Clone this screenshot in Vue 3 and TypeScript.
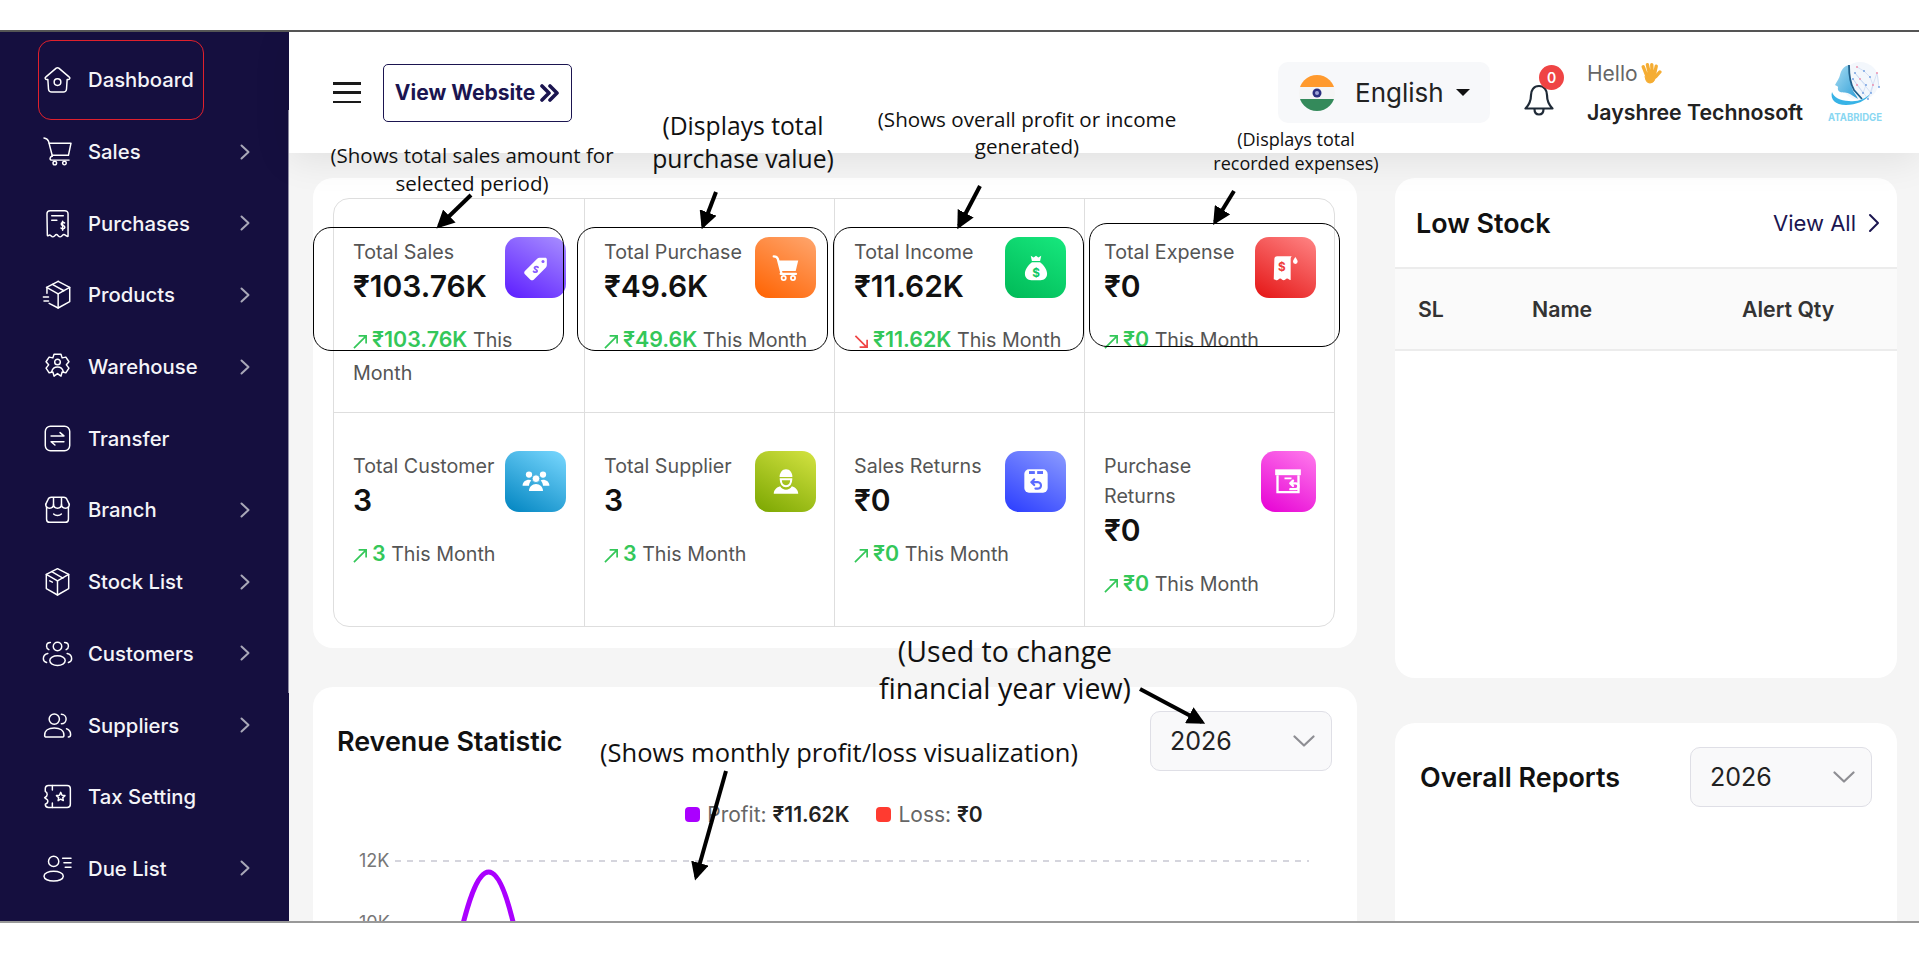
<script setup lang="ts">
interface MenuItem {
  label: string;
  arrow: boolean;
  icon: string[];
}

interface Stat {
  title: string;
  value: string;
  trend: string;
  down?: boolean;
  tone: string;
}

const menu: MenuItem[] = [
  { label: 'Dashboard', arrow: false, icon: ['M2.8 10.2 11 3.2a1.6 1.6 0 0 1 2 0l8.2 7a1 1 0 0 1-.6 1.8h-1.1l-.5 7.6a2.5 2.5 0 0 1-2.5 2.2H7.5A2.5 2.5 0 0 1 5 19.6L4.5 12H3.4a1 1 0 0 1-.6-1.8z', 'M9.4 14a2.6 2.6 0 1 0 5.2 0 2.6 2.6 0 1 0-5.2 0'] },
  { label: 'Sales', arrow: true, icon: ['M1.5 1.5c1.9.2 3 1 3.6 2.8L8 15.5', 'M5.6 5.5h16.9l-2 9.5H7.8', 'M8 15.5c-1.2.3-1.8 1-1.8 1.9 0 .7.6 1.3 1.4 1.3H21', 'M8.5 21a1.4 1.4 0 1 0 2.8 0 1.4 1.4 0 1 0-2.8 0', 'M16 21a1.4 1.4 0 1 0 2.8 0 1.4 1.4 0 1 0-2.8 0'] },
  { label: 'Purchases', arrow: true, icon: ['M3.8 4.5A2.5 2.5 0 0 1 6.3 2h11.4a2.5 2.5 0 0 1 2.5 2.5V22c-1.6.3-2-1.4-3.2-1.4s-1.7 1.8-3 1.8-1.7-1.8-2.8-1.8-1.6 1.8-2.9 1.8-1.6-1.8-2.7-1.4-1.5 1-1.5-.1z', 'M7.5 6h9', 'M7.5 9.5h4', 'M17.5 11.6c-.5-.7-2.6-.7-2.6.7 0 1.7 2.8.9 2.8 2.7 0 1.4-2.3 1.3-3 .5', 'M16 10.2v7'] },
  { label: 'Products', arrow: true, icon: ['M12.5 1.8 21.5 6.5v11l-9 5-7-3.6', 'M12.5 11.5v11', 'M3.5 6.5l9 5 9-5', 'M3.5 6.5l9-4.7', 'M3.8 6.8V11', 'M8 4.2l9 4.9', 'M1 14h4', 'M1.5 17h3.5'] },
  { label: 'Warehouse', arrow: true, icon: ['M9.3 2.5h5.4l.9 2.8 2.9-.6 2.4 3.6-2 2.4 2 2.6-2.4 3.6-2.9-.6-.9 3.2-2.7-2-2.7 2-.9-3.2-2.9.6-2.4-3.6 2-2.6-2-2.4 2.4-3.6 2.9.6z', 'M9.8 8.5a2.2 2.2 0 1 0 4.4 0 2.2 2.2 0 1 0-4.4 0', 'M7.5 16c.6-2.6 2.5-3.6 4.5-3.6s3.9 1 4.5 3.6'] },
  { label: 'Transfer', arrow: false, icon: ['M6.5 2.5h11a4 4 0 0 1 4 4v11a4 4 0 0 1-4 4h-11a4 4 0 0 1-4-4v-11a4 4 0 0 1 4-4z', 'M7 10h10l-3-2.6', 'M17 14.5H7l3 2.6'] },
  { label: 'Branch', arrow: true, icon: ['M2.8 8 4.5 4.5A3 3 0 0 1 7.2 2.5h9.6a3 3 0 0 1 2.7 2L21.2 8', 'M2.8 8c0 2 1.5 3 3 3s3.1-1 3.1-3c0 2 1.5 3 3.1 3s3.1-1 3.1-3c0 2 1.5 3 3.1 3s3-1 3-3', 'M3.5 10v9.5A2.5 2.5 0 0 0 6 22h12a2.5 2.5 0 0 0 2.5-2.5V10', 'M9 15.5c1.5 1.5 4.5 1.5 6 0', 'M8.9 3v5', 'M15.1 3v5'] },
  { label: 'Stock List', arrow: true, icon: ['M12 2l8.7 4.5v11L12 22.5l-8.7-5v-11z', 'M3.3 6.5l8.7 5 8.7-5', 'M12 11.5v11', 'M7.5 4.3l8.7 5', 'M6 11.5l2 1'] },
  { label: 'Customers', arrow: true, icon: ['M8.7 6.5a3.3 3.3 0 1 0 6.6 0 3.3 3.3 0 1 0-6.6 0', 'M6 17.5c0-2.2 2.7-3.8 6-3.8s6 1.6 6 3.8-2.7 3.8-6 3.8-6-1.6-6-3.8z', 'M6.5 3.5c-1.8 0-3 1.3-3 2.8 0 1.2.8 2.2 1.8 2.7', 'M4.5 12C2.3 12.5 1 14 1 16c0 1.5 1 2.5 2.5 3', 'M17.5 3.5c1.8 0 3 1.3 3 2.8 0 1.2-.8 2.2-1.8 2.7', 'M19.5 12c2.2.5 3.5 2 3.5 4 0 1.5-1 2.5-2.5 3'] },
  { label: 'Suppliers', arrow: true, icon: ['M5.5 7a4 4 0 1 0 8 0 4 4 0 1 0-8 0', 'M2 19.5c0-3.5 3-5.5 7.5-5.5s7.5 2 7.5 5.5c0 1-.8 1.5-1.5 1.5h-12C2.8 21 2 20.5 2 19.5z', 'M15 3.3c2.2 0 3.7 1.6 3.7 3.7s-1.5 3.7-3.7 3.7', 'M19 14.5c2 .7 3.2 2.3 3.2 4.5 0 1.2-.8 2-1.8 2'] },
  { label: 'Tax Setting', arrow: false, icon: ['M5 3.5h14.5a2.5 2.5 0 0 1 2.5 2.5v12a2.5 2.5 0 0 1-2.5 2.5H5a2.5 2.5 0 0 1-2.5-2.5c1.5-.5 2-1.5 2-2.5S3 14 2 13c1-.5 2-1.5 2-2.5S3.5 8.5 2.5 8V6A2.5 2.5 0 0 1 5 3.5z', 'M8 3.5V7', 'M8 17v3.5', 'M14.5 8.8l1 2.2 2.3.3-1.7 1.6.4 2.3-2-1.1-2 1.1.4-2.3-1.7-1.6 2.3-.3z'] },
  { label: 'Due List', arrow: true, icon: ['M5 6.5a4 4 0 1 0 8 0 4 4 0 1 0-8 0', 'M1.5 18c0-2.2 3.4-3.8 7.5-3.8s7.5 1.6 7.5 3.8-3.4 3.8-7.5 3.8S1.5 20.2 1.5 18z', 'M16 4h6.5', 'M17 7.5h5.5', 'M18 11h4.5'] },
];

const stats: Stat[] = [
  { title: 'Total Sales', value: '₹103.76K', trend: '₹103.76K', tone: 'purple' },
  { title: 'Total Purchase', value: '₹49.6K', trend: '₹49.6K', tone: 'orange' },
  { title: 'Total Income', value: '₹11.62K', trend: '₹11.62K', down: true, tone: 'green' },
  { title: 'Total Expense', value: '₹0', trend: '₹0', tone: 'red' },
  { title: 'Total Customer', value: '3', trend: '3', tone: 'sky' },
  { title: 'Total Supplier', value: '3', trend: '3', tone: 'olive' },
  { title: 'Sales Returns', value: '₹0', trend: '₹0', tone: 'indigo' },
  { title: 'Purchase Returns', value: '₹0', trend: '₹0', tone: 'pink' },
];

const brainDots: number[][] = [
  [30, 8], [37, 12], [43, 18], [46, 26], [44, 34], [28, 14], [33, 20], [39, 26], [36, 34], [30, 26], [26, 20], [41, 40], [50, 14], [52, 28],
];
</script>

<template>
  <div class="stage">
    <div class="strip-top"></div>

    <div class="frame">
      <aside class="sidebar">
        <span class="side-edge"></span>
        <div v-for="item in menu" :key="item.label" class="side-item">
          <svg class="side-icon" viewBox="1.5 1.5 21 21" fill="none" stroke="#fff" stroke-width="1.15" stroke-linecap="round" stroke-linejoin="round">
            <path v-for="d in item.icon" :key="d" :d="d" />
          </svg>
          <span>{{ item.label }}</span>
          <svg v-if="item.arrow" class="side-chevron" viewBox="0 0 10 16" fill="none" stroke="#a9a8b8" stroke-width="2" stroke-linecap="round" stroke-linejoin="round">
            <path d="M1.5 1.5 8.5 8l-7 6.5" />
          </svg>
        </div>
      </aside>

      <main class="main">
        <header class="topnav">
          <div class="burger"><i></i><i></i><i></i></div>
          <button class="site-btn">
            View Website
            <svg viewBox="0 0 20 18" fill="none" stroke="#1b1550" stroke-width="3.6" stroke-linecap="round" stroke-linejoin="round">
              <path d="M2 2l7 7-7 7M10 2l7 7-7 7" />
            </svg>
          </button>

          <div class="lang">
            <svg class="flag" viewBox="0 0 36 36">
              <defs><clipPath id="flag-c"><circle cx="18" cy="18" r="18" /></clipPath></defs>
              <g clip-path="url(#flag-c)">
                <rect width="36" height="12" fill="#ff9a2e" />
                <rect y="12" width="36" height="12" fill="#f5f5f5" />
                <rect y="24" width="36" height="12" fill="#348a5b" />
              </g>
              <circle cx="18" cy="18" r="4.5" fill="#2b2f80" />
              <circle cx="18" cy="18" r="2" fill="#9ea3d6" />
            </svg>
            <span class="lang-name">English</span>
            <i class="caret"></i>
          </div>

          <div class="bell">
            <svg viewBox="0 0 30 33" fill="none" stroke="#1f2a37" stroke-width="2.2" stroke-linejoin="round" stroke-linecap="round">
              <path d="M15 3C9.5 3 7 7.5 7 12c0 6-2 10-5.5 13.5h27C25 22 23 18 23 12c0-4.5-2.5-9-8-9z" />
              <path d="M10.5 26c0 3.5 2 5.5 4.5 5.5s4.5-2 4.500-5.500" />
            </svg>
            <span class="bell-count">0</span>
          </div>

          <div class="greet">
            <div class="hello">
              Hello
              <svg viewBox="0 0 22 22" fill="none" stroke="#f5ad33" stroke-linecap="round">
                <path d="M4 4.5 7 12M8 2.5l1.800 8M12.200 2.500l.3 8M16.500 4l-1.500 7" stroke-width="3.200" />
                <path d="M20 9.500 16 14" stroke-width="3.200" />
                <path d="M7.500 10.500h7l1 5c-1 3.500-3 4.500-5 4.500S6.500 18 5.800 14z" fill="#f5ad33" stroke-width="1" />
              </svg>
            </div>
            <div class="user">Jayshree Technosoft</div>
          </div>

          <svg class="logo" viewBox="0 0 56 67">
            <defs>
              <linearGradient id="head-g" x1="0" y1="0" x2="1" y2="1">
                <stop offset="0" stop-color="#a8dcf2" />
                <stop offset="1" stop-color="#2f9fd8" />
              </linearGradient>
            </defs>
            <circle cx="33" cy="22" r="19" fill="#f3f7fc" />
            <path v-for="(p, i) in brainDots.slice(1)" :key="i" :d="`M${brainDots[i][0]} ${brainDots[i][1]}L${p[0]} ${p[1]}`" stroke="#b9cdee" stroke-width=".5" />
            <circle v-for="(p, i) in brainDots" :key="'d' + i" :cx="p[0]" :cy="p[1]" r=".9" :fill="i % 3 === 0 ? '#f08aa8' : '#6d9be0'" />
            <path d="M22 6c-5 1-8 5-9 10-.5 3-3 6-5 10 1 1 3 1 3 2-.5 2 0 4 2 5 3 1 7 0 10 2l8 5c-2-5-5-7-6-11-2-7-3-15-3-23z" fill="url(#head-g)" />
            <path d="M22 6c0 9 1 18 5 25l8 9" fill="none" stroke="#1f5f8a" stroke-width="1.8" />
            <path d="M5 33c-2 7 3 13 14 13 10 0 20-4 24-11-5 5-12 8-21 7-9-.5-15-3-17-9z" fill="#38b3e6" />
            <text x="1" y="62" class="logo-text" textLength="54" lengthAdjust="spacingAndGlyphs">ATABRIDGE</text>
          </svg>
        </header>

        <div class="content">
          <div class="col">
            <section class="card stats-card">
              <div class="stats-grid">
                <div v-for="s in stats" :key="s.title" class="stat">
                  <div class="stat-head">
                    <div class="stat-text">
                      <div class="stat-title">{{ s.title }}</div>
                      <div class="stat-value">{{ s.value }}</div>
                    </div>
                    <div class="stat-icon" :class="'tone-' + s.tone">
                      <svg v-if="s.tone === 'purple'" viewBox="0 0 24 24">
                        <path d="M2.5 14.5 13 4c.6-.6 1.3-.8 2-.8h5c.7 0 1.300.6 1.300 1.300v5c0 .7-.2 1.400-.8 2L10 22c-.8.8-2 .8-2.800 0l-4.700-4.700c-.8-.8-.8-2 0-2.800z" fill="#fff" />
                        <circle cx="18" cy="6.5" r="1.3" fill="#8a5cff" />
                        <path d="M13.8 11.5c-.8-1-2.700-1-3.100.2-.5 1.500 2.800 1.500 2.300 3-.4 1.200-2.300 1.200-3.100.2" fill="none" stroke="#8a5cff" stroke-width="1.5" stroke-linecap="round" />
                      </svg>
                      <svg v-else-if="s.tone === 'orange'" viewBox="0 0 24 24">
                        <path d="M1.5 2c2 0 3 .6 3.500 2.200L8 16" fill="none" stroke="#fff" stroke-width="2" stroke-linecap="round" />
                        <path d="M5.5 5.5h17l-2.200 9H7.500z" fill="#fff" />
                        <rect x="6.5" y="16" width="15" height="2" rx="1" fill="#fff" />
                        <circle cx="10" cy="20.5" r="1.8" fill="none" stroke="#fff" stroke-width="1.5" />
                        <circle cx="18" cy="20.5" r="1.8" fill="none" stroke="#fff" stroke-width="1.5" />
                      </svg>
                      <svg v-else-if="s.tone === 'green'" viewBox="0 0 24 24">
                        <path d="M7.5 1.5 10 3l2-1.500L14 3l2.500-1.500L15.500 6h-7zM8.500 7h7c3.500 2.500 6 6.500 6 10 0 3.500-2.500 5.500-5.500 5.500H8c-3 0-5.500-2-5.500-5.500 0-3.500 2.500-7.500 6-10z" fill="#fff" />
                        <text x="12" y="19.5" class="in-icon" fill="#0ec765" text-anchor="middle">$</text>
                      </svg>
                      <svg v-else-if="s.tone === 'red'" viewBox="0 0 24 24">
                        <path d="M2 4.5A2.500 2.500 0 0 1 4.500 2h12.500c-.8.6-1 1.500-1 2.500v17.800c-1 .5-1.800-1.200-3-1.200s-1.800 1.500-3 1.500-1.800-1.500-3-1.500-1.800 1.500-2.800 1.500-1.700-1-2.700-1z" fill="#fff" />
                        <path d="M20 2.5c1 1.500 2 2.800 2 4a2 2 0 0 1-4 0c0-1.200 1-2.500 2-4z" fill="#fff" />
                        <text x="8.5" y="14.5" class="in-icon" fill="#ef3e3e" text-anchor="middle">$</text>
                      </svg>
                      <svg v-else-if="s.tone === 'sky'" viewBox="0 0 24 24">
                        <circle cx="6" cy="6.5" r="2.7" fill="#fff" />
                        <circle cx="18" cy="6.5" r="2.7" fill="#fff" />
                        <circle cx="12" cy="10" r="3.3" fill="#fff" stroke="#3aaadd" stroke-width=".7" />
                        <path d="M.5 16c0-3 2.500-5 5.500-5 .8 0 1.500.2 2 .5-1 1.200-2 2.500-2 4.500z M23.500 16c0-3-2.500-5-5.500-5-.8 0-1.500.2-2 .5 1 1.200 2 2.500 2 4.500z" fill="#fff" />
                        <path d="M6 20.5c0-3.500 2.700-6 6-6s6 2.500 6 6z" fill="#fff" />
                      </svg>
                      <svg v-else-if="s.tone === 'olive'" viewBox="0 0 24 24">
                        <path d="M6.5 8.5c0-3.500 2.200-6.500 5.500-6.500s5.500 3 5.500 6.500z" fill="#fff" />
                        <path d="M7.5 10.5h9c0 3.500-1.800 6-4.500 6s-4.500-2.500-4.500-6z" fill="none" stroke="#fff" stroke-width="1.8" />
                        <path d="M1.5 23c0-3.500 2.500-5.500 5.500-6.500 1 1.800 3 3 5 3s4-1.200 5-3c3 1 5.500 3 5.500 6.500z" fill="#fff" />
                      </svg>
                      <svg v-else-if="s.tone === 'indigo'" viewBox="0 0 24 24">
                        <rect x="2" y="2" width="20" height="20" rx="4" fill="#fff" />
                        <rect x="6" y="3.5" width="5" height="2.5" fill="#5c6cff" />
                        <rect x="13" y="3.5" width="5" height="2.5" fill="#5c6cff" />
                        <path d="M8 13h6a2.800 2.800 0 0 1 0 5.500h-2.500M8 13l2.500-2.500M8 13l2.500 2.500" fill="none" stroke="#5c6cff" stroke-width="1.8" stroke-linecap="round" stroke-linejoin="round" />
                      </svg>
                      <svg v-else viewBox="0 0 24 24">
                        <rect x="1" y="2" width="22" height="5" fill="#fff" />
                        <path d="M3 7v14.500h18V7" fill="none" stroke="#fff" stroke-width="2" />
                        <rect x="9" y="9" width="6" height="1.5" fill="#fff" />
                        <path d="M14 14h4.500a2.500 2.500 0 0 1 0 5H14M14 14l2.300-2.300M14 14l2.300 2.300" fill="none" stroke="#fff" stroke-width="2" stroke-linecap="round" stroke-linejoin="round" />
                      </svg>
                    </div>
                  </div>
                  <div class="stat-trend">
                    <svg v-if="s.down" class="trend-arrow" viewBox="0 0 16 16" fill="none" stroke="#f04545" stroke-width="1.8">
                      <path d="M1.5 2 13 13.500M14 6v8H6" />
                    </svg>
                    <svg v-else class="trend-arrow" viewBox="0 0 16 16" fill="none" stroke="#34c759" stroke-width="1.8">
                      <path d="M1 15 13 3M6 2h8v8" />
                    </svg>
                    <b>{{ s.trend }}</b> This Month
                  </div>
                </div>
              </div>
            </section>

            <section class="card revenue-card">
              <div class="card-row">
                <h2>Revenue Statistic</h2>
                <div class="year-select">
                  2026
                  <svg viewBox="0 0 22 12" fill="none" stroke="#8e8e93" stroke-width="2.2" stroke-linecap="round" stroke-linejoin="round"><path d="M1.5 1.5 11 10.5l9.5-9" /></svg>
                </div>
              </div>
              <div class="legend">
                <i class="dot dot-profit"></i><span>Profit: <b>₹11.62K</b></span>
                <i class="dot dot-loss"></i><span>Loss: <b>₹0</b></span>
              </div>
              <svg class="chart" viewBox="0 0 1044 100">
                <text x="46" y="17.5" class="axis">12K</text>
                <text x="46" y="80" class="axis">10K</text>
                <line x1="82" y1="12" x2="996" y2="12" stroke="#c8c8d2" stroke-width="1.5" stroke-dasharray="6 6" />
                <path d="M144 100C154 55 164 23 175.6 23 187 23 197 55 206 100" fill="none" stroke="#aa00ff" stroke-width="5" />
              </svg>
            </section>
          </div>

          <div class="col side-col">
            <section class="card low-card">
              <div class="low-head">
                <h2>Low Stock</h2>
                <div class="view-all">
                  View All
                  <svg viewBox="0 0 12 20" fill="none" stroke="#1b1550" stroke-width="2" stroke-linecap="round" stroke-linejoin="round"><path d="M2 2l8 8-8 8" /></svg>
                </div>
              </div>
              <div class="low-table">
                <span class="th-sl">SL</span>
                <span class="th-name">Name</span>
                <span>Alert Qty</span>
              </div>
            </section>

            <section class="card overall-card">
              <div class="card-row">
                <h2>Overall Reports</h2>
                <div class="year-select">
                  2026
                  <svg viewBox="0 0 22 12" fill="none" stroke="#8e8e93" stroke-width="2.2" stroke-linecap="round" stroke-linejoin="round"><path d="M1.5 1.5 11 10.5l9.5-9" /></svg>
                </div>
              </div>
            </section>
          </div>
        </div>
      </main>
    </div>

    <div class="strip-bottom"></div>

    <!-- annotations drawn over the screenshot -->
    <div class="mark mark-home"></div>
    <div class="mark box box-sales"></div>
    <div class="mark box box-purchase"></div>
    <div class="mark box box-income"></div>
    <div class="mark box box-expense"></div>

    <div class="note note-sales">(Shows total sales amount for<br />selected period)</div>
    <div class="note note-purchase">(Displays total<br />purchase value)</div>
    <div class="note note-income">(Shows overall profit or income<br />generated)</div>
    <div class="note note-expense">(Displays total<br />recorded expenses)</div>
    <div class="note note-year">(Used to change<br />financial year view)</div>
    <div class="note note-chart">(Shows monthly profit/loss visualization)</div>

    <svg class="arrows" viewBox="0 0 1919 953">
      <defs>
        <marker id="head" viewBox="0 0 10 10" refX="8" refY="5" markerWidth="4.5" markerHeight="4.5" orient="auto">
          <path d="M0 0 10 5 0 10z" fill="#000" />
        </marker>
      </defs>
      <g stroke="#000" stroke-width="4" marker-end="url(#head)">
        <line x1="471" y1="195" x2="439" y2="226" />
        <line x1="716" y1="192" x2="703" y2="226" />
        <line x1="980" y1="186" x2="959" y2="226" />
        <line x1="1234" y1="191" x2="1215" y2="222" />
        <line x1="1140" y1="689" x2="1202" y2="722" />
        <line x1="726" y1="771" x2="696" y2="877" />
      </g>
    </svg>
  </div>
</template>

<style scoped>
.stage {
  position: relative;
  width: 1919px;
  height: 953px;
  overflow: hidden;
  background: #fff;
  font-family: Inter, "Liberation Sans", sans-serif;
  color: #111;
}

.strip-top {
  height: 32px;
  box-sizing: border-box;
  border-bottom: 2px solid #555;
}

.strip-bottom {
  height: 32px;
  box-sizing: border-box;
  border-top: 2px solid #999;
}

.frame {
  display: flex;
  height: 889px;
  overflow: hidden;
}

/* Sidebar */
.sidebar {
  position: relative;
  flex: 0 0 289px;
  box-sizing: border-box;
  padding-top: 12px;
  background: #150f3f;
  color: #f4f4f8;
}

.side-edge {
  position: absolute;
  top: 78px;
  right: 0;
  width: 1px;
  height: 583px;
  background: #8f8da3;
}

.side-item {
  display: flex;
  align-items: center;
  gap: 17px;
  height: 71.7px;
  padding: 0 39px 0 44px;
  font-size: 20.3px;
  font-weight: 500;
}

.side-icon {
  flex: 0 0 27px;
  width: 27px;
  height: 27px;
  overflow: visible;
}

.side-chevron {
  width: 10px;
  height: 16px;
  margin-left: auto;
}

/* Main */
.main {
  flex: 1;
  min-width: 0;
  display: flex;
  flex-direction: column;
  background: #f5f5f5;
}

.topnav {
  position: relative;
  z-index: 2;
  flex: 0 0 121px;
  display: flex;
  align-items: center;
  padding: 0 36px 0 44px;
  background: #fff;
  box-shadow: 0 6px 36px rgba(0, 0, 0, 0.09);
}

.burger {
  display: flex;
  flex-direction: column;
  justify-content: space-between;
  width: 28px;
  height: 21px;
  margin-right: 22px;
}

.burger i {
  height: 2.5px;
  background: #1a1a1a;
}

.site-btn {
  display: flex;
  align-items: center;
  justify-content: center;
  gap: 5px;
  width: 189px;
  height: 58px;
  padding: 0;
  background: #fff;
  border: 1px solid #1b1550;
  border-radius: 5px;
  font: 700 21px Inter, sans-serif;
  color: #1b1550;
}

.site-btn svg {
  width: 20px;
  height: 18px;
}

.lang {
  display: flex;
  align-items: center;
  width: 212px;
  height: 61px;
  box-sizing: border-box;
  margin-left: auto;
  padding-left: 21px;
  background: #f7f8fa;
  border-radius: 10px;
}

.flag {
  width: 36px;
  height: 36px;
}

.lang-name {
  margin-left: 20px;
  font-size: 26px;
  color: #222;
}

.caret {
  margin-left: 12px;
  border-top: 7px solid #111;
  border-left: 7px solid transparent;
  border-right: 7px solid transparent;
}

.bell {
  position: relative;
  width: 30px;
  height: 33px;
  margin: 14px 33px 0 34px;
}

.bell svg {
  display: block;
  width: 30px;
  height: 33px;
}

.bell-count {
  position: absolute;
  top: -18px;
  left: 15px;
  width: 25px;
  height: 25px;
  border-radius: 50%;
  background: #ef4444;
  color: #fff;
  font-size: 14px;
  font-weight: 600;
  line-height: 25px;
  text-align: center;
}

.greet {
  width: 215px;
  line-height: 38px;
  white-space: nowrap;
}

.hello {
  display: flex;
  align-items: center;
  gap: 1px;
  font-size: 21px;
  color: #666;
}

.hello svg {
  width: 23px;
  height: 23px;
}

.user {
  font-size: 21.3px;
  font-weight: 600;
  color: #222;
}

.logo {
  flex: 0 0 56px;
  width: 56px;
  height: 67px;
  margin-left: 25px;
}

.logo-text {
  font: 700 10px Inter, sans-serif;
  fill: #8ad7f2;
}

/* Content */
.content {
  flex: 1;
  min-height: 0;
  display: grid;
  grid-template-columns: 1044px 502px;
  gap: 38px;
  padding: 25px 22px 0 24px;
}

.col {
  display: flex;
  flex-direction: column;
  gap: 39px;
}

.side-col {
  gap: 45px;
}

.card {
  flex: none;
  background: #fff;
  border-radius: 20px;
}

h2 {
  margin: 0;
  font-size: 26.9px;
  font-weight: 600;
  color: #111;
}

.stats-card {
  height: 470px;
  box-sizing: border-box;
  padding: 20px 22px 21px 20px;
}

.stats-grid {
  display: grid;
  grid-template-columns: 251px 250px 250px 1fr;
  grid-auto-rows: 1fr;
  height: 100%;
  box-sizing: border-box;
  border: 1px solid #dedede;
  border-radius: 16px;
}

.stat {
  box-sizing: border-box;
  min-width: 0;
  padding: 38px 18px 0 19px;
  border-right: 1px solid #dedede;
}

.stat:nth-child(4n) {
  border-right: 0;
}

.stat:nth-child(-n + 4) {
  border-bottom: 1px solid #dedede;
}

.stat-head {
  display: flex;
  justify-content: space-between;
  align-items: flex-start;
  gap: 8px;
}

.stat-title {
  font-size: 19.7px;
  line-height: 30px;
  color: #555;
}

.stat-value {
  font-size: 30px;
  font-weight: 600;
  line-height: 38px;
  color: #111;
}

.stat-icon {
  flex: 0 1 61px;
  display: flex;
  align-items: center;
  justify-content: center;
  height: 61px;
  border-radius: 14px;
}

.stat-icon svg {
  width: 28px;
  height: 28px;
}

.tone-purple { background: linear-gradient(30deg, #5c1cff, #a88fff); }
.tone-orange { background: linear-gradient(30deg, #ff6200, #ffa66e); }
.tone-green { background: linear-gradient(30deg, #00b957, #17e87e); }
.tone-red { background: linear-gradient(30deg, #e41414, #ff8585); }
.tone-sky { background: linear-gradient(30deg, #0084c0, #7ad8ff); }
.tone-olive { background: linear-gradient(30deg, #7aa600, #d4e342); }
.tone-indigo { background: linear-gradient(30deg, #2a3cff, #8c9cff); }
.tone-pink { background: linear-gradient(30deg, #e600d4, #ff7cec); }

.in-icon {
  font: 700 10px Inter, sans-serif;
}

.stat-trend {
  margin-top: 18px;
  font-size: 19.7px;
  line-height: 33px;
  color: #555;
}

.stat-trend b {
  font-size: 21.4px;
  font-weight: 600;
  color: #34c759;
}

.trend-arrow {
  width: 15px;
  height: 15px;
  margin-right: 4px;
  vertical-align: -2px;
}

.card-row {
  display: flex;
  align-items: center;
  justify-content: space-between;
}

.revenue-card {
  height: 400px;
  padding: 24px 25px 0 24px;
}

.year-select {
  display: flex;
  align-items: center;
  justify-content: space-between;
  width: 182px;
  height: 60px;
  box-sizing: border-box;
  padding: 0 16px 0 19px;
  background: #f9f9fa;
  border: 1px solid #dfdfe6;
  border-radius: 10px;
  font-size: 25px;
  color: #222;
}

.year-select svg {
  width: 22px;
  height: 12px;
}

.legend {
  display: flex;
  align-items: center;
  justify-content: center;
  height: 22px;
  margin: 32px 0 0 -1px;
  font-size: 21px;
  color: #666;
}

.legend b {
  font-weight: 600;
  color: #222;
}

.dot {
  width: 15px;
  height: 15px;
  margin-right: 7px;
  border-radius: 4px;
}

.dot-profit {
  background: #aa00ff;
}

.dot-loss {
  margin-left: 27px;
  background: #ff3b30;
}

.chart {
  display: block;
  width: 1044px;
  height: 100px;
  margin: 23.5px 0 0 -24px;
}

.axis {
  font: 18px Inter, sans-serif;
  fill: #777;
}

.low-card {
  height: 500px;
}

.low-head {
  display: flex;
  align-items: center;
  justify-content: space-between;
  height: 91px;
  box-sizing: border-box;
  padding: 0 17px 0 21px;
  border-bottom: 2px solid #ececec;
}

.view-all {
  display: flex;
  align-items: center;
  gap: 12px;
  font-size: 22px;
  color: #1b1550;
}

.view-all svg {
  width: 12px;
  height: 20px;
}

.low-table {
  display: flex;
  align-items: center;
  height: 82px;
  box-sizing: border-box;
  padding-left: 23px;
  background: #fafafa;
  border-bottom: 2px solid #ececec;
  font-size: 21.3px;
  font-weight: 600;
  color: #333;
}

.th-sl {
  width: 114px;
}

.th-name {
  width: 210px;
}

.overall-card {
  height: 300px;
  padding: 24px 25px 0 25px;
}

/* Annotations */
.mark {
  position: absolute;
  z-index: 3;
  box-sizing: border-box;
}

.mark-home {
  left: 38px;
  top: 40px;
  width: 166px;
  height: 80px;
  border: 1px solid #e0202c;
  border-radius: 13px;
}

.box {
  width: 251px;
  height: 124px;
  border: 1.5px solid #000;
  border-radius: 18px;
}

.box-sales { left: 313px; top: 227px; }
.box-purchase { left: 577px; top: 227px; }
.box-income { left: 833px; top: 227px; }
.box-expense { left: 1089px; top: 223px; }

.note {
  position: absolute;
  z-index: 3;
  font-family: "Open Sans", sans-serif;
  color: #111;
  text-align: center;
  white-space: nowrap;
  transform: translateX(-50%);
}

.note-sales { left: 472px; top: 141px; font-size: 20.5px; line-height: 28px; }
.note-purchase { left: 743px; top: 109px; font-size: 24.7px; line-height: 33px; }
.note-income { left: 1027px; top: 106px; font-size: 20.6px; line-height: 27px; }
.note-expense { left: 1296px; top: 127px; font-size: 18px; line-height: 24px; }
.note-year { left: 1005px; top: 633px; font-size: 28.5px; line-height: 37px; }
.note-chart { left: 839px; top: 735px; font-size: 25.5px; line-height: 34px; }

.arrows {
  position: absolute;
  inset: 0;
  z-index: 3;
  width: 1919px;
  height: 953px;
  pointer-events: none;
}
</style>

<style>
body {
  margin: 0;
}
</style>
